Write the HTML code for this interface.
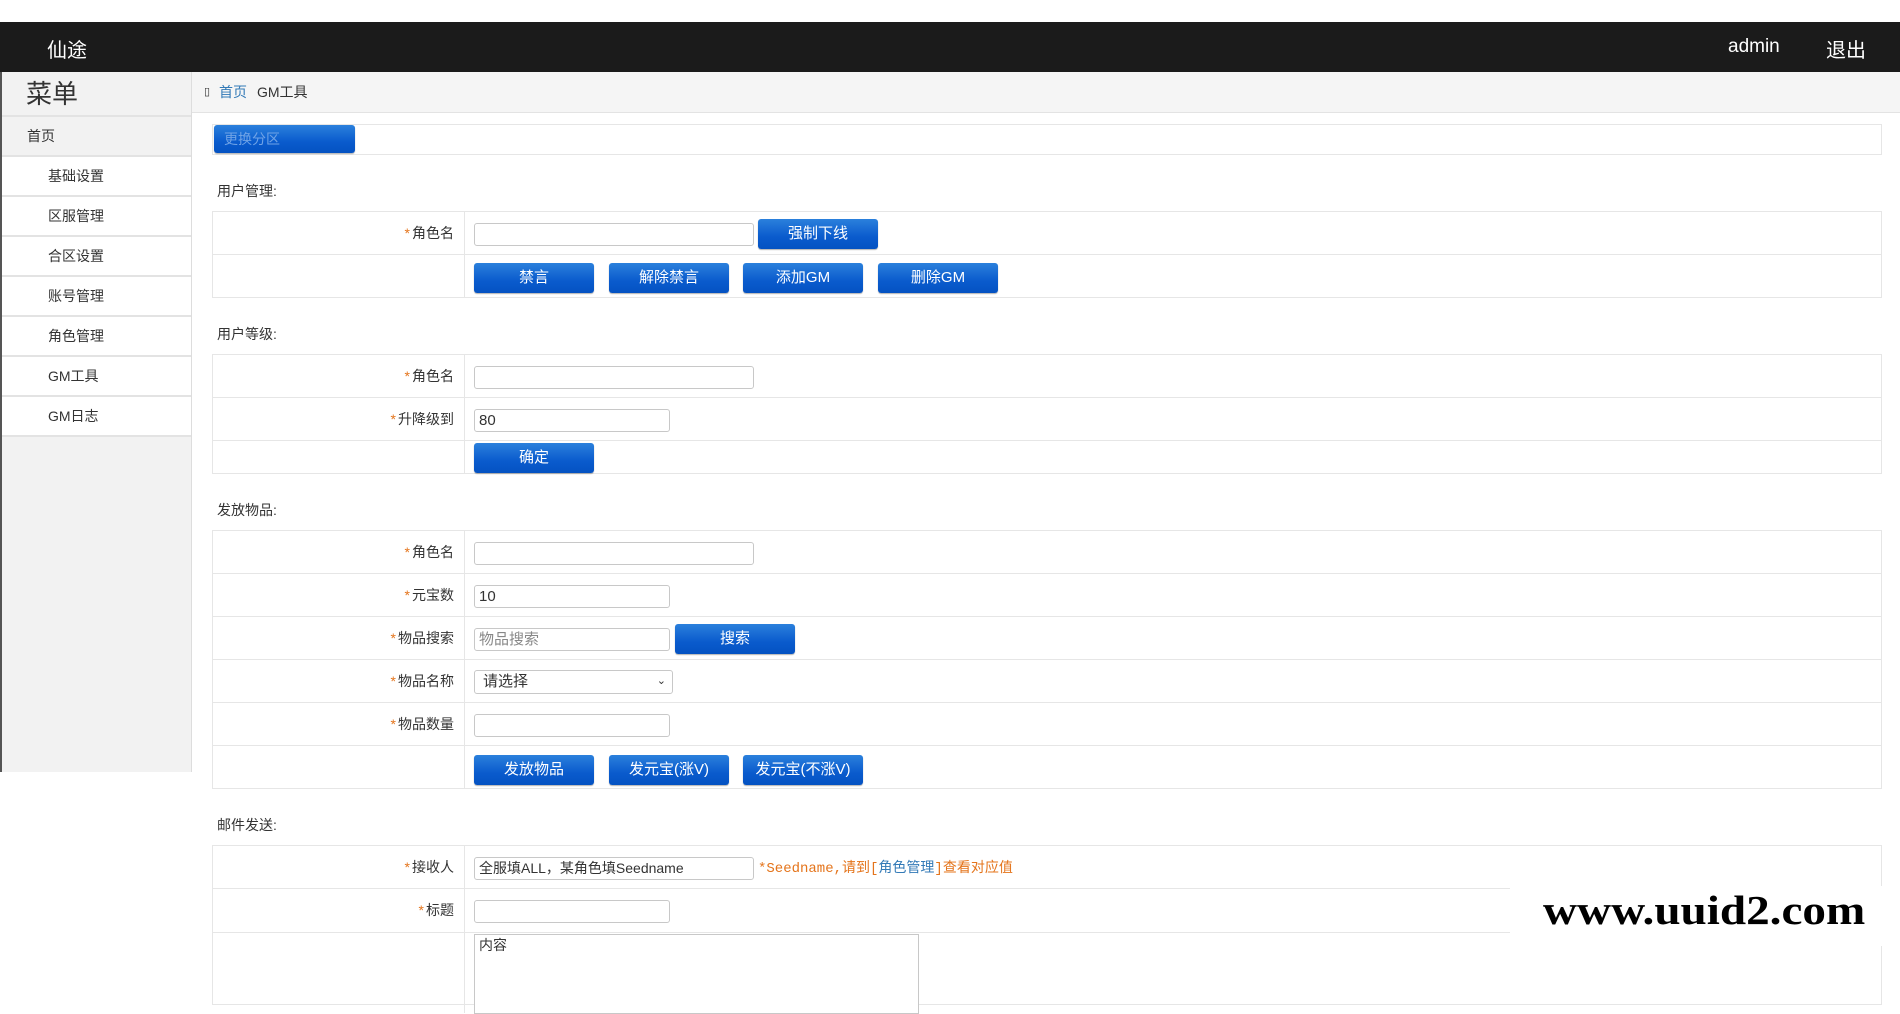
<!DOCTYPE html>
<html><head><meta charset="utf-8"><style>
*{box-sizing:border-box;margin:0;padding:0}
body{width:1900px;height:969px;overflow:hidden;background:#fff;font-family:"Liberation Sans","Microsoft YaHei","Noto Sans CJK SC",sans-serif;color:#333;position:relative}
.a{position:absolute}
.hdr{left:0;top:22px;width:1900px;height:50px;background:#1b1b1b;color:#fff}
.side{left:0;top:72px;width:192px;height:700px;background:#f2f2f2;border-left:2px solid #555;border-right:1px solid #ddd}
.mi{position:absolute;left:0;width:189px;height:40px;border-bottom:2px solid #e3e3e3;font-size:14px;line-height:38px;background:#fff;padding-left:46px}
.bc{left:192px;top:72px;width:1708px;height:41px;background:#f5f5f5;border-bottom:1px solid #e3e3e3;font-size:14px;line-height:40px}
.btn{position:absolute;height:30px;border-radius:3px;background:linear-gradient(#2b80dc,#0a5bcd 60%,#0452c2);color:#fff;font-size:15px;text-align:center;line-height:30px;box-shadow:0 1px 1px rgba(0,0,0,.3)}
.tbl{position:absolute;left:212px;width:1670px;border:1px solid #e6e6e6}
.row{position:absolute;left:0;width:100%;border-bottom:1px solid #e6e6e6}
.lab{position:absolute;left:0;top:0;width:252px;height:100%;border-right:1px solid #e6e6e6;text-align:right;padding-right:10px;font-size:14px}
.lab b{color:#e4741b;font-weight:normal;margin-right:2px}
.inp{position:absolute;height:23px;border:1px solid #c8c8c8;border-radius:3px;background:#fff;font-size:15px;line-height:21px;padding-left:4px}
.sec{position:absolute;left:217px;font-size:14px}
</style></head><body>
<div class="a hdr"><span class="a" style="left:47px;top:12px;font-size:20px">仙途</span><span class="a" style="left:1728px;top:14px;font-size:19px">admin</span><span class="a" style="left:1826px;top:12px;font-size:20px">退出</span></div>
<div class="a side">
<div class="a" style="left:0;top:0;width:189px;height:45px;border-bottom:2px solid #e3e3e3;font-size:26px;line-height:44px;padding-left:24px">菜单</div>
<div class="mi" style="top:45px;background:#f2f2f2;padding-left:25px">首页</div>
<div class="mi" style="top:85px">基础设置</div>
<div class="mi" style="top:125px">区服管理</div>
<div class="mi" style="top:165px">合区设置</div>
<div class="mi" style="top:205px">账号管理</div>
<div class="mi" style="top:245px">角色管理</div>
<div class="mi" style="top:285px">GM工具</div>
<div class="mi" style="top:325px">GM日志</div>
</div>
<div class="a bc"><span class="a" style="left:12px;top:0;font-size:11px">&#9647;</span><span class="a" style="left:27px;color:#337ab7">首页</span><span class="a" style="left:65px">GM工具</span></div>
<div class="a" style="left:212px;top:124px;width:1670px;height:31px;border:1px solid #e6e6e6"></div>
<div class="btn" style="left:214px;top:125px;width:141px;height:28px;line-height:28px;color:#6fa3e6;text-align:left;padding-left:10px;font-size:14px">更换分区</div>

<div class="sec" style="top:181px">用户管理:</div>
<div class="tbl" style="top:211px;height:87px">
<div class="row" style="top:0;height:43px"><div class="lab" style="line-height:42px"><b>*</b>角色名</div><div class="inp" style="left:261px;top:11px;width:280px"></div><div class="btn" style="left:545px;top:7px;width:120px">强制下线</div></div>
<div class="row" style="top:43px;height:43px;border:0"><div class="lab"></div><div class="btn" style="left:261px;top:8px;width:120px">禁言</div><div class="btn" style="left:396px;top:8px;width:120px">解除禁言</div><div class="btn" style="left:530px;top:8px;width:120px">添加GM</div><div class="btn" style="left:665px;top:8px;width:120px">删除GM</div></div>
</div>

<div class="sec" style="top:324px">用户等级:</div>
<div class="tbl" style="top:354px;height:120px">
<div class="row" style="top:0;height:43px"><div class="lab" style="line-height:42px"><b>*</b>角色名</div><div class="inp" style="left:261px;top:11px;width:280px"></div></div>
<div class="row" style="top:43px;height:43px"><div class="lab" style="line-height:42px"><b>*</b>升降级到</div><div class="inp" style="left:261px;top:11px;width:196px">80</div></div>
<div class="row" style="top:86px;height:33px;border:0"><div class="lab"></div><div class="btn" style="left:261px;top:2px;width:120px">确定</div></div>
</div>

<div class="sec" style="top:500px">发放物品:</div>
<div class="tbl" style="top:530px;height:259px">
<div class="row" style="top:0;height:43px"><div class="lab" style="line-height:42px"><b>*</b>角色名</div><div class="inp" style="left:261px;top:11px;width:280px"></div></div>
<div class="row" style="top:43px;height:43px"><div class="lab" style="line-height:42px"><b>*</b>元宝数</div><div class="inp" style="left:261px;top:11px;width:196px">10</div></div>
<div class="row" style="top:86px;height:43px"><div class="lab" style="line-height:42px"><b>*</b>物品搜索</div><div class="inp" style="left:261px;top:11px;width:196px;color:#888">物品搜索</div><div class="btn" style="left:462px;top:7px;width:120px">搜索</div></div>
<div class="row" style="top:129px;height:43px"><div class="lab" style="line-height:42px"><b>*</b>物品名称</div><div class="inp" style="left:261px;top:10px;width:199px;height:24px;padding-left:8px">请选择<span style="position:absolute;right:6px;top:0;font-size:11px">&#8964;</span></div></div>
<div class="row" style="top:172px;height:43px"><div class="lab" style="line-height:42px"><b>*</b>物品数量</div><div class="inp" style="left:261px;top:11px;width:196px"></div></div>
<div class="row" style="top:215px;height:43px;border:0"><div class="lab"></div><div class="btn" style="left:261px;top:9px;width:120px">发放物品</div><div class="btn" style="left:396px;top:9px;width:120px">发元宝(涨V)</div><div class="btn" style="left:530px;top:9px;width:120px">发元宝(不涨V)</div></div>
</div>

<div class="sec" style="top:815px">邮件发送:</div>
<div class="tbl" style="top:845px;height:160px">
<div class="row" style="top:0;height:43px"><div class="lab" style="line-height:42px"><b>*</b>接收人</div><div class="inp" style="left:261px;top:11px;width:280px;font-size:14px">全服填ALL，某角色填Seedname</div><span class="a" style="left:545px;top:11px;font-size:14px;color:#e4741b;font-family:'Liberation Mono','Noto Sans CJK SC',monospace">*Seedname,请到[<span style="color:#337ab7">角色管理</span>]查看对应值</span></div>
<div class="row" style="top:43px;height:44px"><div class="lab" style="line-height:42px"><b>*</b>标题</div><div class="inp" style="left:261px;top:11px;width:196px"></div></div>
<div class="row" style="top:87px;height:80px;border:0"><div class="lab"></div><div class="inp" style="left:261px;top:1px;width:445px;height:80px;border-radius:0;font-size:14px">内容</div></div>
</div>
<div class="a" style="left:1510px;top:886px;width:390px;height:60px;background:#fff"></div>
<div class="a" style="left:1543px;top:886px;font-family:'Liberation Serif',serif;font-weight:bold;font-size:41px;color:#000;transform:scaleX(1.15);transform-origin:0 0">www.uuid2.com</div>
</body></html>
